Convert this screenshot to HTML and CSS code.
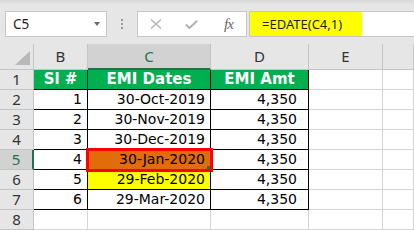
FILE: index.html
```html
<!DOCTYPE html>
<html lang="en">
<head>
	<meta charset="UTF-8">
	<title>EDATE</title>
	<link rel="stylesheet" href="styles.css">
</head>
<body>
	<div class="bar">
		<div class="namebox"><span>C5</span><i class="drop"></i></div>
		<div class="grip"><i></i><i></i><i></i></div>
		<div class="tools">
			<svg class="ic-x" width="12" height="10" viewBox="0 0 12 10"><path d="M1 0.5 L11 9.5 M11 0.5 L1 9.5" stroke="#b3b3b3" stroke-width="1.4" fill="none"/></svg>
			<svg class="ic-ok" width="13" height="9" viewBox="0 0 13 9"><path d="M0.8 4.6 L4.4 8 L12.2 0.8" stroke="#b3b3b3" stroke-width="2" fill="none"/></svg>
			<span class="fx">fx</span>
		</div>
		<div class="formula"><span class="hl">=EDATE(C4,1)</span></div>
	</div>

	<div class="sheet">
		<div class="h corner"><i></i></div>
		<div class="h">B</div>
		<div class="h sel">C</div>
		<div class="h">D</div>
		<div class="h">E</div>
		<div class="h"></div>

		<div class="rh">1</div>
		<div class="c t g">Sl #</div>
		<div class="c t g">EMI Dates</div>
		<div class="c t g">EMI Amt</div>
		<div class="c"></div>
		<div class="c"></div>

		<div class="rh">2</div>
		<div class="c t r">1</div>
		<div class="c t r">30-Oct-2019</div>
		<div class="c t r amt">4,350</div>
		<div class="c"></div>
		<div class="c"></div>

		<div class="rh">3</div>
		<div class="c t r">2</div>
		<div class="c t r">30-Nov-2019</div>
		<div class="c t r amt">4,350</div>
		<div class="c"></div>
		<div class="c"></div>

		<div class="rh">4</div>
		<div class="c t r">3</div>
		<div class="c t r">30-Dec-2019</div>
		<div class="c t r amt">4,350</div>
		<div class="c"></div>
		<div class="c"></div>

		<div class="rh sel">5</div>
		<div class="c t r">4</div>
		<div class="c t r orange active">30-Jan-2020</div>
		<div class="c t r amt">4,350</div>
		<div class="c"></div>
		<div class="c"></div>

		<div class="rh">6</div>
		<div class="c t r">5</div>
		<div class="c t r yellow">29-Feb-2020</div>
		<div class="c t r amt">4,350</div>
		<div class="c"></div>
		<div class="c"></div>

		<div class="rh">7</div>
		<div class="c t r">6</div>
		<div class="c t r">29-Mar-2020</div>
		<div class="c t r amt">4,350</div>
		<div class="c"></div>
		<div class="c"></div>

		<div class="rh">8</div>
		<div class="c"></div>
		<div class="c"></div>
		<div class="c"></div>
		<div class="c"></div>
		<div class="c"></div>
	</div>
</body>
</html>
```

FILE: styles.css
```css
html,body{
	margin: 0;
	padding: 0;
	background: #fff;
	overflow: hidden;
}
body{
	font: 14px "DejaVu Sans", Verdana, sans-serif;
	color: #000;
}

/* formula bar */
.bar{
	display: flex;
	align-items: flex-start;
	height: 44px;
	padding: 11px 0 0 5px;
	box-sizing: border-box;
	background: linear-gradient(#d8d8d8, #e6e6e6 5px);
}
.namebox,.tools,.formula{
	height: 26px;
	box-sizing: border-box;
	border: 1px solid #c6c6c6;
	background: #fff;
}
.namebox{
	position: relative;
	width: 102px;
	padding-left: 7px;
	font: 13.5px/24px "Noto Sans", sans-serif;
	color: #1e1e1e;
}
.namebox .drop{
	position: absolute;
	right: 6px;
	top: 10px;
	border-left: 3px solid transparent;
	border-right: 3px solid transparent;
	border-top: 4px solid #6a6a6a;
}
.grip{
	width: 30px;
	display: flex;
	flex-direction: column;
	align-items: center;
	padding-top: 8px;
}
.grip i{
	width: 2px;
	height: 2px;
	background: #9a9a9a;
	margin-bottom: 2px;
}
.tools{
	width: 110px;
	display: flex;
	align-items: center;
}
.ic-x{
	margin-left: 12px;
}
.ic-ok{
	margin-left: 23px;
	margin-top: 1px;
}
.fx{
	margin-left: 26px;
	font: italic 15px "Liberation Serif", serif;
	color: #666;
	letter-spacing: -1px;
}
.formula{
	flex: 1;
	margin-left: 2px;
	margin-right: -2px;
	font: 13px/24px "Noto Sans", sans-serif;
	color: #1e1e1e;
}
.formula .hl{
	display: inline-block;
	width: 112px;
	height: 24px;
	padding-left: 12px;
	box-sizing: border-box;
	background: #ffff00;
}

/* sheet */
.sheet{
	display: grid;
	grid-template-columns: 34px 54px 123px 98px 74px 1fr;
	grid-template-rows: 26px repeat(8, 20px);
}
.sheet > div{
	box-sizing: border-box;
	white-space: nowrap;
	overflow: hidden;
}
.h{
	background: #e6e6e6;
	border-right: 1px solid #c4c4c4;
	border-bottom: 1px solid #c4c4c4;
	text-align: center;
	font: 15px/25px "Noto Sans", sans-serif;
	color: #333;
}
.h.sel{
	background: #d2d2d2;
	color: #217346;
	border-bottom: 2px solid #217346;
}
.corner{
	position: relative;
}
.corner i{
	position: absolute;
	right: 3px;
	bottom: 4px;
	border-left: 15px solid transparent;
	border-bottom: 14px solid #b8b8b8;
}
.rh{
	background: #e6e6e6;
	border-right: 1px solid #c4c4c4;
	border-bottom: 1px solid #c4c4c4;
	text-align: center;
	font: 15px/19px "Noto Sans", sans-serif;
	color: #333;
}
.rh.sel{
	background: #d2d2d2;
	color: #217346;
	border-right: 2px solid #217346;
}
.c{
	border-right: 1px solid #d4d4d4;
	border-bottom: 1px solid #d4d4d4;
	line-height: 19px;
	padding: 0 5px;
}
.c.t{
	border-right-color: #000;
	border-bottom-color: #000;
}
.c.g{
	background: #00b050;
	color: #fff;
	font-weight: bold;
	font-size: 15px;
	text-align: center;
}
.c.r{
	text-align: right;
}
.c.amt{
	padding-right: 11px;
}
.c.orange{
	background: #e26b0a;
}
.c.yellow{
	background: #ffff00;
}
.c.active{
	position: relative;
	overflow: visible;
	outline: 3px solid #f00;
	outline-offset: -1px;
	z-index: 1;
}
.c.active::after{
	content: "";
	position: absolute;
	right: 0;
	bottom: 0;
	width: 3px;
	height: 3px;
	background: #217346;
}
```
